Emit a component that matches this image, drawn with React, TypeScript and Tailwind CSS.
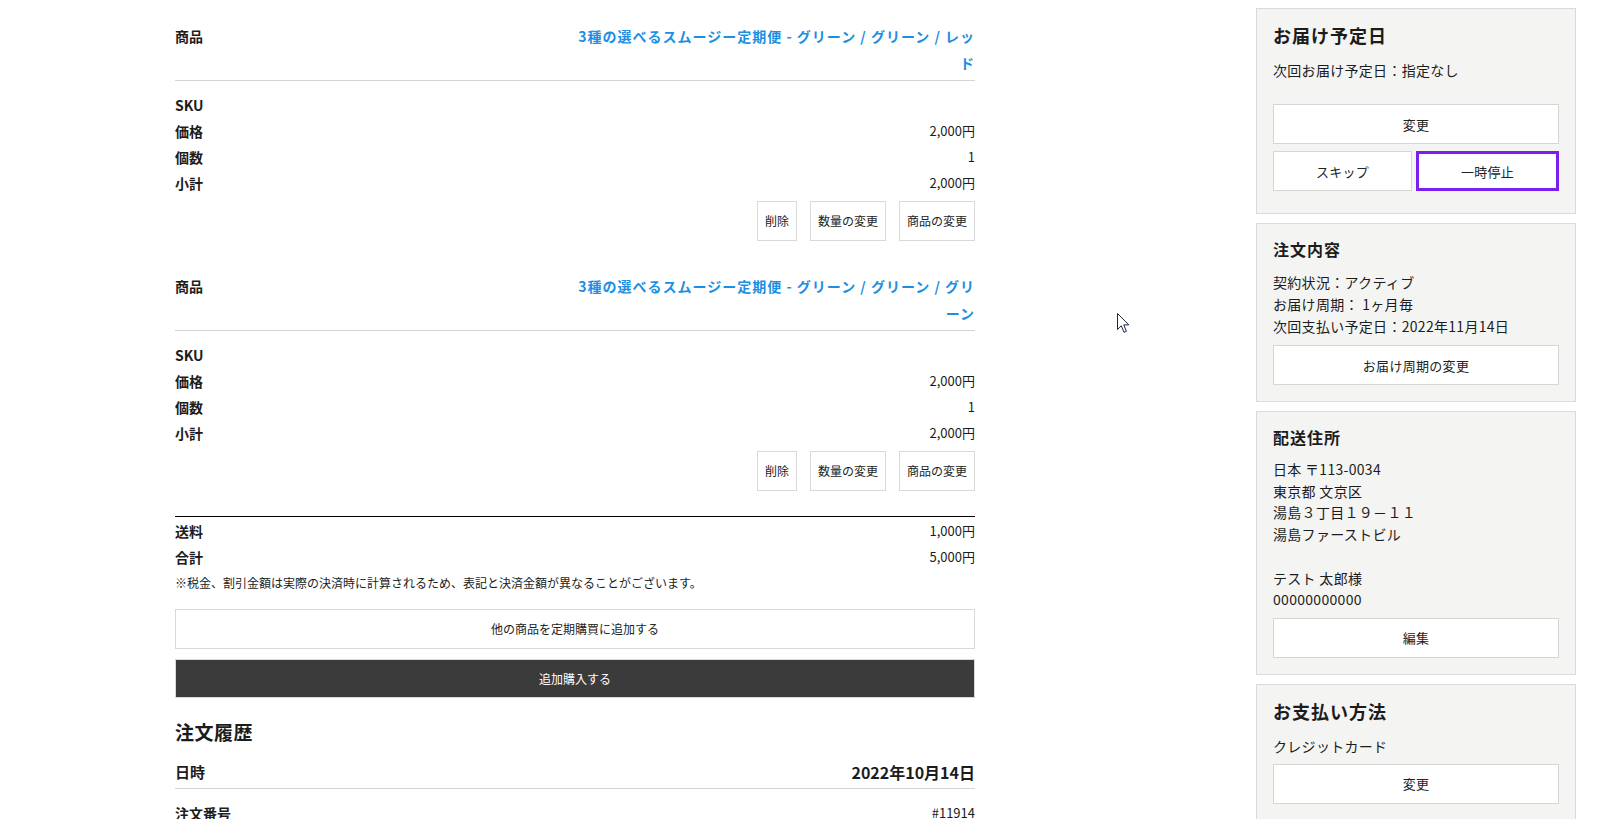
import React from "react";

type Item = { name: string; price: string; qty: string; subtotal: string };

const items: Item[] = [
  {
    name: "3種の選べるスムージー定期便 - グリーン / グリーン / レッド",
    price: "2,000円",
    qty: "1",
    subtotal: "2,000円",
  },
  {
    name: "3種の選べるスムージー定期便 - グリーン / グリーン / グリーン",
    price: "2,000円",
    qty: "1",
    subtotal: "2,000円",
  },
];

function Row({ label, value }: { label: string; value?: string }) {
  return (
    <div className="flex items-center justify-between leading-[26px]">
      <span className="text-[14px] font-bold">{label}</span>
      <span className="text-[13px]">{value}</span>
    </div>
  );
}

function SmallButton({ children }: { children: React.ReactNode }) {
  return (
    <button className="h-[40px] border border-[#d9d9d9] bg-white px-[7px] text-[12px] leading-none text-[#222]">
      {children}
    </button>
  );
}

function LineItem({ item }: { item: Item }) {
  return (
    <div>
      <div className="flex items-start justify-between border-b border-[#d4d4d4] pb-[3px]">
        <span className="text-[14px] font-bold leading-[27px]">商品</span>
        <a
          href="#"
          className="w-[404px] text-right text-[14px] font-bold leading-[27px] tracking-[1px] text-[#1c8fe2] [line-break:anywhere]"
        >
          {item.name}
        </a>
      </div>
      <div className="pt-[11px]">
        <Row label="SKU" />
        <Row label="価格" value={item.price} />
        <Row label="個数" value={item.qty} />
        <Row label="小計" value={item.subtotal} />
      </div>
      <div className="mt-[5px] flex justify-end gap-[13px]">
        <SmallButton>削除</SmallButton>
        <SmallButton>数量の変更</SmallButton>
        <SmallButton>商品の変更</SmallButton>
      </div>
    </div>
  );
}

function Panel({
  children,
  className = "",
}: {
  children: React.ReactNode;
  className?: string;
}) {
  return (
    <section
      className={`border border-[#dadada] bg-[#f4f4f3] px-[16px] pt-[14px] ${className}`}
    >
      {children}
    </section>
  );
}

function PanelButton({
  children,
  className = "",
  focused = false,
}: {
  children: React.ReactNode;
  className?: string;
  focused?: boolean;
}) {
  const edge = focused
    ? "border-[3px] border-[#7b1ff0]"
    : "border border-[#d6d6d6]";
  return (
    <button
      className={`h-[40px] w-full bg-white text-[13px] leading-none text-[#222] ${edge} ${className}`}
    >
      {children}
    </button>
  );
}

function Cursor() {
  return (
    <svg
      className="pointer-events-none absolute left-[1117px] top-[313px]"
      width="13"
      height="21"
      viewBox="0 0 13 21"
    >
      <path
        d="M0.5 0.5 L0.5 16.5 L4.3 12.8 L7 19.3 L9.4 18.3 L6.8 11.9 L11.8 11.9 Z"
        fill="#ffffff"
        stroke="#1e2340"
        strokeWidth="1"
        strokeLinejoin="round"
      />
    </svg>
  );
}

export default function App() {
  return (
    <div className="relative min-h-screen bg-white font-['Noto_Sans_CJK_JP',sans-serif] text-[#1c1c1c]">
      <div className="flex items-start justify-between pl-[175px] pr-[23px]">
        <main className="w-[800px] pt-[23px]">
          <div className="flex flex-col gap-[32px]">
            {items.map((item, i) => (
              <LineItem key={i} item={item} />
            ))}
          </div>

          <div className="mt-[25px] border-t border-black pt-[1px]">
            <Row label="送料" value="1,000円" />
            <Row label="合計" value="5,000円" />
            <p className="mt-[3px] text-[12px] leading-[20px]">
              ※税金、割引金額は実際の決済時に計算されるため、表記と決済金額が異なることがございます。
            </p>
            <button className="mt-[16px] h-[40px] w-full border border-[#d9d9d9] bg-white text-[12px] text-[#222]">
              他の商品を定期購買に追加する
            </button>
            <button className="mt-[10px] h-[39px] w-full border border-[#d9d9d9] bg-[#3b3b3b] text-[12px] text-white">
              追加購入する
            </button>
          </div>

          <h2 className="mt-[21px] text-[19px] font-bold leading-[26px] tracking-[0.5px]">注文履歴</h2>
          <div className="mt-[13px] flex items-center justify-between border-b border-[#d4d4d4] pb-[2px] text-[15px] font-bold leading-[28px]">
            <span>日時</span>
            <span className="text-[16px]">2022年10月14日</span>
          </div>
          <div className="flex items-center justify-between pt-[11px] leading-[26px]">
            <span className="text-[14px] font-bold">注文番号</span>
            <span className="text-[13px]">#11914</span>
          </div>
        </main>

        <aside className="flex w-[320px] flex-col gap-[9px] pt-[8px] text-[14px] tracking-[0.3px]">
          <Panel className="pb-[22px]">
            <h3 className="text-[18px] font-bold leading-[24px] tracking-[1px]">お届け予定日</h3>
            <p className="mt-[12px] leading-[22px]">次回お届け予定日：指定なし</p>
            <PanelButton className="mt-[23px]">変更</PanelButton>
            <div className="mt-[7px] flex gap-[4px]">
              <PanelButton className="flex-1">スキップ</PanelButton>
              <PanelButton className="flex-1" focused>
                一時停止
              </PanelButton>
            </div>
          </Panel>

          <Panel className="pb-[16px]">
            <h3 className="text-[16px] font-bold leading-[22px] tracking-[1px]">注文内容</h3>
            <div className="mt-[11px] leading-[22px]">
              <p>契約状況：アクティブ</p>
              <p>お届け周期： 1ヶ月毎</p>
              <p>次回支払い予定日：2022年11月14日</p>
            </div>
            <PanelButton className="mt-[8px] h-[39px]">お届け周期の変更</PanelButton>
          </Panel>

          <Panel className="pb-[16px]">
            <h3 className="text-[16px] font-bold leading-[22px] tracking-[1px]">配送住所</h3>
            <div className="mt-[11px] leading-[21.7px]">
              <p>日本 〒113-0034</p>
              <p>東京都 文京区</p>
              <p>湯島３丁目１９－１１</p>
              <p>湯島ファーストビル</p>
              <p>&nbsp;</p>
              <p>テスト 太郎様</p>
              <p>00000000000</p>
            </div>
            <PanelButton className="mt-[7px]">編集</PanelButton>
          </Panel>

          <Panel className="pb-[16px]">
            <h3 className="text-[18px] font-bold leading-[24px] tracking-[1px]">お支払い方法</h3>
            <p className="mt-[12px] leading-[22px]">クレジットカード</p>
            <PanelButton className="mt-[7px]">変更</PanelButton>
          </Panel>
        </aside>
      </div>
      <Cursor />
    </div>
  );
}
